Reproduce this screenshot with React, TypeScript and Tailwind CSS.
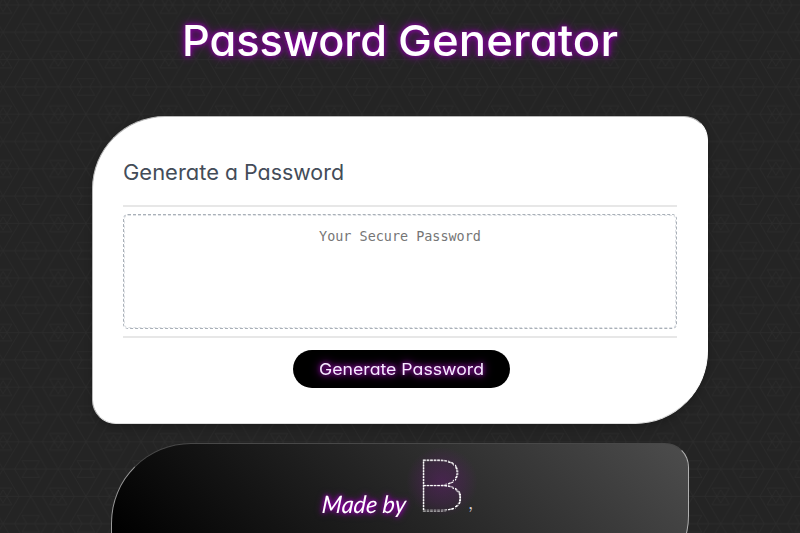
function TrianglePattern() {
  return (
    <svg className="absolute inset-0 h-full w-full" aria-hidden="true">
      <defs>
        <pattern id="triangles" x="3.1" y="32.3" width="55.2" height="54.6" patternUnits="userSpaceOnUse">
          <path
            d="M0 0H55.2M0 27.3H55.2M0 54.6H55.2M0 0L16 27.3L0 54.6M55.2 0L39.2 27.3L55.2 54.6M11.6 0L27.6 27.3L43.6 0M11.6 54.6L27.6 27.3L43.6 54.6M0 19H8.7L0 34M0 35.6H8.7L0 20.6M55.2 19H46.5L55.2 34M55.2 35.6H46.5L55.2 20.6M18.9 8.3H36.3L31.5 0M18.9 8.3L23.7 0M18.9 46.3H36.3L31.5 54.6M18.9 46.3L23.7 54.6"
            fill="none"
            stroke="#2b2b2b"
            strokeWidth="0.9"
          />
        </pattern>
      </defs>
      <rect width="100%" height="100%" fill="url(#triangles)" />
    </svg>
  );
}

function DottedInitial() {
  return (
    <div className="relative h-[72px] w-[64px] shrink-0">
      <div className="absolute -top-1 -left-4 h-[70px] w-[72px] rounded-full bg-[radial-gradient(closest-side,rgba(98,30,112,.5),rgba(98,30,112,.25)_60%,transparent)]" />
      <svg className="relative h-[72px] w-[64px] overflow-visible" viewBox="0 0 64 72">
        <defs>
          <pattern id="dots" x="0" y="0.4" width="2.9" height="2.9" patternUnits="userSpaceOnUse">
            <rect width="2.1" height="2.1" fill="#fff" />
          </pattern>
        </defs>
        <text transform="translate(-9.5 59.5) scale(1.22 1)" x="0" y="0" fill="url(#dots)" stroke="url(#dots)" strokeWidth="0.9" fontSize="72" fontWeight="100" fontFamily="Lato, sans-serif">B</text>
        <text x="46" y="58" fill="#d8d0da" fontSize="24" fontWeight="300" fontFamily="Lato, sans-serif">,</text>
      </svg>
    </div>
  );
}

export default function App() {
  return (
    <div className="relative h-[533px] w-full overflow-hidden bg-[#242424] font-['Inter',sans-serif] [font-feature-settings:'cv11']">
      <TrianglePattern />
      <div className="relative flex flex-col items-center">
        <header className="flex h-[116px] w-full justify-center pt-[14px]">
          <svg className="h-14 w-[436px] overflow-visible [filter:drop-shadow(0_0_2px_#8f00aa)_drop-shadow(0_0_4px_#76008c)]" viewBox="0 0 436 56">
            <text y="41.5" fill="#fff" fontSize="43" fontWeight="500" fontFamily="Inter, sans-serif">
              <tspan x="0" textLength="205" lengthAdjust="spacingAndGlyphs">Password</tspan>
              <tspan x="216" textLength="220" lengthAdjust="spacingAndGlyphs">Generator</tspan>
            </text>
          </svg>
        </header>
        <main className="h-[308px] w-[616px] rounded-tl-[73px] rounded-tr-[24px] rounded-br-[73px] rounded-bl-[24px] border border-[#b8b8b8] border-r-white border-b-[#dedede] bg-white px-[30px] shadow-[0_4px_8px_rgba(0,0,0,.2)]">
          <h2 className="h-[88px] pt-[38px]">
            <svg className="h-9 w-[222px] overflow-visible" viewBox="0 0 222 36">
              <text y="25" fill="#434c58" fontSize="21" fontFamily="Inter, sans-serif">
                <tspan x="0" textLength="96" lengthAdjust="spacingAndGlyphs">Generate</tspan>
                <tspan x="102">a</tspan>
                <tspan x="121" textLength="100" lengthAdjust="spacingAndGlyphs">Password</tspan>
              </text>
            </svg>
          </h2>
          <div className="h-[133px] border-y-2 border-[#e7e7e7] py-[7px]">
            <textarea
              readOnly
              aria-label="Your Secure Password"
              placeholder="Your Secure Password"
              className="block h-[115px] w-full resize-none rounded-[5px] border border-dashed border-[#a9b0b8] bg-white pt-[13px] text-center font-['DejaVu_Sans_Mono',monospace] text-[13.45px] leading-[18px] outline-1 -outline-offset-2 outline-dashed outline-[#dde0e4] placeholder:text-[#757575]"
            />
          </div>
          <div className="flex justify-center pt-3">
            <button className="ml-[3px] flex h-[38px] w-[217px] items-center justify-center rounded-full bg-black">
              <svg className="h-7 w-[164px] overflow-visible [filter:drop-shadow(0_0_2px_#8c15a0)_drop-shadow(0_0_4px_#760089)]" viewBox="0 0 164 28">
                <text x="-1" y="20" fill="#f6eaff" fontSize="16.3" fontFamily="Inter, sans-serif" textLength="165" lengthAdjust="spacingAndGlyphs">Generate Password</text>
              </svg>
            </button>
          </div>
        </main>
        <footer className="mt-[19px] flex h-[146px] w-[578px] items-start rounded-tl-[80px] rounded-tr-[24px] rounded-br-[73px] rounded-bl-[24px] border border-t-[#484848] border-r-[#b0b0b0] border-b-[#777] border-l-[#999] bg-[linear-gradient(45deg,#000_8%,#4b4b4b_98%)] pt-[7px] pl-[209px]">
          <svg className="mt-[32px] h-10 w-[101px] shrink-0 overflow-visible [filter:drop-shadow(0_0_2px_#9a00b6)_drop-shadow(0_0_3px_#76008c)]" viewBox="0 0 101 40">
            <text x="3" y="30" transform="skewX(-5)" fill="#fff" fontSize="24" fontStyle="italic" fontWeight="400" fontFamily="Lato, sans-serif" textLength="84" lengthAdjust="spacingAndGlyphs">Made by</text>
          </svg>
          <DottedInitial />
        </footer>
      </div>
    </div>
  );
}
